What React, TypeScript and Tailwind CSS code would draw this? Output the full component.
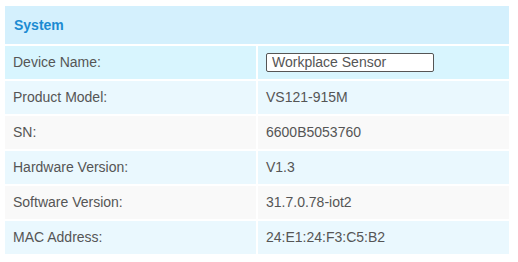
import React from "react";

const rows: { label: string; value: string; bg: string }[] = [
  { label: "Product Model:", value: "VS121-915M", bg: "bg-[#eaf8fe]" },
  { label: "SN:", value: "6600B5053760", bg: "bg-[#f9f9f9]" },
  { label: "Hardware Version:", value: "V1.3", bg: "bg-[#eaf8fe]" },
  { label: "Software Version:", value: "31.7.0.78-iot2", bg: "bg-[#f9f9f9]" },
  { label: "MAC Address:", value: "24:E1:24:F3:C5:B2", bg: "bg-[#eaf8fe]" },
];

export default function App() {
  return (
    <div
      className="w-[518px] h-[262px] bg-white pt-[6px] pl-[5px]"
      style={{ fontFamily: '"Liberation Sans", Arial, sans-serif' }}
    >
      <div className="w-[504px] flex flex-col gap-[2px]">
        <div className="h-[38px] bg-[#d4f0fd] flex items-center pl-[9px]">
          <span className="text-[14px] font-bold text-[#1b8bd2]">System</span>
        </div>
        <div className="grid grid-cols-2 gap-[2px] h-[33px]">
          <div className="bg-[#d8f5fe] flex items-center pl-[8px] text-[14px] text-[#555]">
            Device Name:
          </div>
          <div className="bg-[#d8f5fe] flex items-center pl-[8px]">
            <input
              readOnly
              value="Workplace Sensor"
              className="w-[168px] h-[19px] border border-[#555] rounded-[2px] bg-white px-[5px] text-[14px] text-[#555] outline-none"
              style={{ fontFamily: '"Liberation Sans", Arial, sans-serif' }}
            />
          </div>
        </div>
        {rows.map((r) => (
          <div key={r.label} className="grid grid-cols-2 gap-[2px] h-[33px]">
            <div className={`${r.bg} flex items-center pl-[8px] text-[14px] text-[#555]`}>
              {r.label}
            </div>
            <div className={`${r.bg} flex items-center pl-[8px] text-[14px] text-[#555]`}>
              {r.value}
            </div>
          </div>
        ))}
      </div>
    </div>
  );
}
